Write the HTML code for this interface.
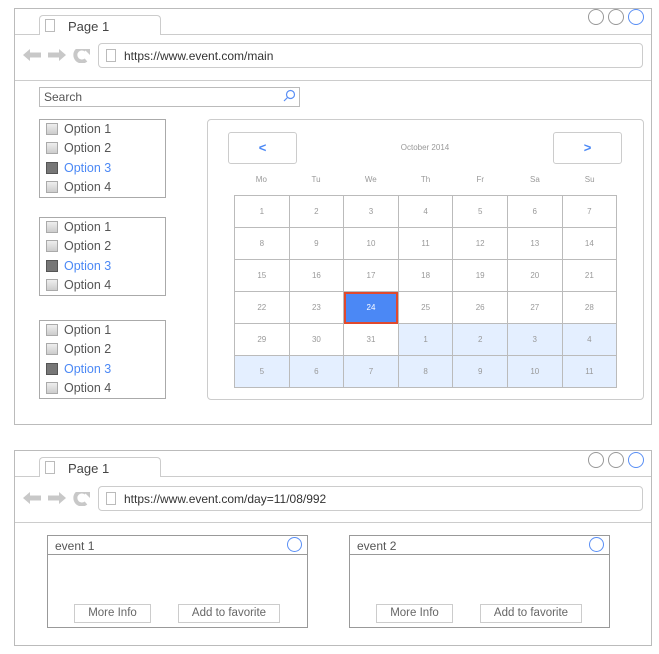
<!DOCTYPE html>
<html><head><style>
*{box-sizing:border-box;margin:0;padding:0}
body{width:659px;height:654px;background:#fff;position:relative;font-family:"Liberation Sans",sans-serif;color:#555;overflow:hidden}
.a{position:absolute}
.win{border:1px solid #bbb;background:#fff}
.line{height:1px;background:#ccc}
.tab{border:1px solid #ccc;border-bottom:none;border-radius:4px 4px 0 0;background:#fff;font-size:13px;color:#444;padding:3px 0 0 28px}
.doc{width:10px;height:13px;border:1px solid #bbb;background:#fff}
.addr{border:1px solid #ccc;border-radius:4px;font-size:12px;color:#333;padding:5px 0 0 25px}
.circ{width:16px;height:16px;border:1px solid #999;border-radius:50%}
.grp{border:1px solid #aaa}
.opt{position:absolute;left:6px;font-size:12.5px;color:#555}
.cb{display:inline-block;width:12px;height:12px;border:1px solid #aaa;background:linear-gradient(#eee,#ccc);vertical-align:-2px;margin-right:6px}
.cb.on{background:#777;border-color:#555}
.btn{border:1px solid #ccc;border-radius:3px;color:#4b88f5;font-size:13px;font-weight:bold;text-align:center}
table{border-collapse:collapse}
td{border:1px solid #bbb;width:54.6px;height:32px;text-align:center;font-size:8px;color:#999}
td.n{background:#e4efff}
.eb{border:1px solid #ccc;font-size:11.5px;color:#666;text-align:center;padding-top:2px}
</style></head><body>
<svg width="0" height="0" style="position:absolute"><defs>
<g id="nav" fill="#c8c8c8">
<path d="M0 6 L7 0 L7 3.5 L18 3.5 L18 8.5 L7 8.5 L7 12 Z"/>
<path d="M43 6 L36 0 L36 3.5 L25 3.5 L25 8.5 L36 8.5 L36 12 Z"/>
<path d="M63 1 A6.5 6.5 0 1 0 63 11" fill="none" stroke="#c8c8c8" stroke-width="4"/>
<path d="M60 -1 L67 -1 L67 6 Z"/>
</g></defs></svg>
<!-- Window 1 -->
<div class="a win" style="left:14px;top:8px;width:638px;height:417px"></div>
<div class="a line" style="left:15px;top:34px;width:636px"></div>
<div class="a tab" style="left:39px;top:15px;width:122px;height:20px">Page 1</div>
<div class="a doc" style="left:45px;top:19px"></div>
<div class="a circ" style="left:588px;top:9px"></div>
<div class="a circ" style="left:608px;top:9px"></div>
<div class="a circ" style="left:628px;top:9px;border-color:#5a8ff5"></div>
<svg class="a" style="left:23px;top:49px" width="70" height="14"><use href="#nav"/></svg>
<div class="a addr" style="left:98px;top:43px;width:545px;height:25px">https://www.event.com/main</div>
<div class="a doc" style="left:106px;top:49px"></div>
<div class="a line" style="left:15px;top:80px;width:636px"></div>
<div class="a" style="left:39px;top:87px;width:261px;height:20px;border:1px solid #bbb;font-size:12px;color:#555;padding:2px 0 0 4px">Search</div>
<svg class="a" style="left:282px;top:89px" width="14" height="14"><circle cx="8.5" cy="5.5" r="4" fill="none" stroke="#5a8ff5" stroke-width="1.2"/><line x1="5.5" y1="8.5" x2="2" y2="12" stroke="#5a8ff5" stroke-width="1.2"/></svg>

<div class="a grp" style="left:39px;top:119px;width:127px;height:79px">
<div class="opt" style="top:2px"><span class="cb"></span>Option 1</div>
<div class="opt" style="top:21px"><span class="cb"></span>Option 2</div>
<div class="opt" style="top:41px;color:#4b88f5"><span class="cb on"></span>Option 3</div>
<div class="opt" style="top:60px"><span class="cb"></span>Option 4</div></div>
<div class="a grp" style="left:39px;top:217px;width:127px;height:79px">
<div class="opt" style="top:2px"><span class="cb"></span>Option 1</div>
<div class="opt" style="top:21px"><span class="cb"></span>Option 2</div>
<div class="opt" style="top:41px;color:#4b88f5"><span class="cb on"></span>Option 3</div>
<div class="opt" style="top:60px"><span class="cb"></span>Option 4</div></div>
<div class="a grp" style="left:39px;top:320px;width:127px;height:79px">
<div class="opt" style="top:2px"><span class="cb"></span>Option 1</div>
<div class="opt" style="top:21px"><span class="cb"></span>Option 2</div>
<div class="opt" style="top:41px;color:#4b88f5"><span class="cb on"></span>Option 3</div>
<div class="opt" style="top:60px"><span class="cb"></span>Option 4</div></div>

<div class="a" style="left:207px;top:119px;width:437px;height:281px;border:1px solid #ccc;border-radius:4px"></div>
<div class="a btn" style="left:228px;top:132px;width:69px;height:32px;line-height:30px">&lt;</div>
<div class="a btn" style="left:553px;top:132px;width:69px;height:32px;line-height:30px">&gt;</div>
<div class="a" style="left:360px;top:143px;width:130px;text-align:center;font-size:8px;color:#999">October 2014</div>
<div class="a" style="left:234px;top:175px;width:383px;font-size:8px;color:#999;display:flex">
<span style="flex:1;text-align:center">Mo</span><span style="flex:1;text-align:center">Tu</span><span style="flex:1;text-align:center">We</span><span style="flex:1;text-align:center">Th</span><span style="flex:1;text-align:center">Fr</span><span style="flex:1;text-align:center">Sa</span><span style="flex:1;text-align:center">Su</span></div>
<table class="a" style="left:234px;top:195px">
<tr><td>1</td><td>2</td><td>3</td><td>4</td><td>5</td><td>6</td><td>7</td></tr>
<tr><td>8</td><td>9</td><td>10</td><td>11</td><td>12</td><td>13</td><td>14</td></tr>
<tr><td>15</td><td>16</td><td>17</td><td>18</td><td>19</td><td>20</td><td>21</td></tr>
<tr><td>22</td><td>23</td><td style="background:#4b88f5;color:#fff;outline:2px solid #e0492c;outline-offset:-2px">24</td><td>25</td><td>26</td><td>27</td><td>28</td></tr>
<tr><td>29</td><td>30</td><td>31</td><td class="n">1</td><td class="n">2</td><td class="n">3</td><td class="n">4</td></tr>
<tr><td class="n">5</td><td class="n">6</td><td class="n">7</td><td class="n">8</td><td class="n">9</td><td class="n">10</td><td class="n">11</td></tr>
</table>

<!-- Window 2 -->
<div class="a win" style="left:14px;top:450px;width:638px;height:196px"></div>
<div class="a line" style="left:15px;top:476px;width:636px"></div>
<div class="a tab" style="left:39px;top:457px;width:122px;height:20px">Page 1</div>
<div class="a doc" style="left:45px;top:461px"></div>
<div class="a circ" style="left:588px;top:452px"></div>
<div class="a circ" style="left:608px;top:452px"></div>
<div class="a circ" style="left:628px;top:452px;border-color:#5a8ff5"></div>
<svg class="a" style="left:23px;top:492px" width="70" height="14"><use href="#nav"/></svg>
<div class="a addr" style="left:98px;top:486px;width:545px;height:25px">https://www.event.com/day=11/08/992</div>
<div class="a doc" style="left:106px;top:492px"></div>
<div class="a line" style="left:15px;top:522px;width:636px"></div>

<div class="a" style="left:47px;top:535px;width:261px;height:93px;border:1px solid #999"></div>
<div class="a" style="left:47px;top:554px;width:261px;height:1px;background:#999"></div>
<div class="a" style="left:55px;top:539px;font-size:12px;color:#555">event 1</div>
<div class="a circ" style="left:287px;top:537px;width:15px;height:15px;border-color:#5a8ff5"></div>
<div class="a eb" style="left:74px;top:604px;width:77px;height:19px">More Info</div>
<div class="a eb" style="left:178px;top:604px;width:102px;height:19px">Add to favorite</div>

<div class="a" style="left:349px;top:535px;width:261px;height:93px;border:1px solid #999"></div>
<div class="a" style="left:349px;top:554px;width:261px;height:1px;background:#999"></div>
<div class="a" style="left:357px;top:539px;font-size:12px;color:#555">event 2</div>
<div class="a circ" style="left:589px;top:537px;width:15px;height:15px;border-color:#5a8ff5"></div>
<div class="a eb" style="left:376px;top:604px;width:77px;height:19px">More Info</div>
<div class="a eb" style="left:480px;top:604px;width:102px;height:19px">Add to favorite</div>
</body></html>
